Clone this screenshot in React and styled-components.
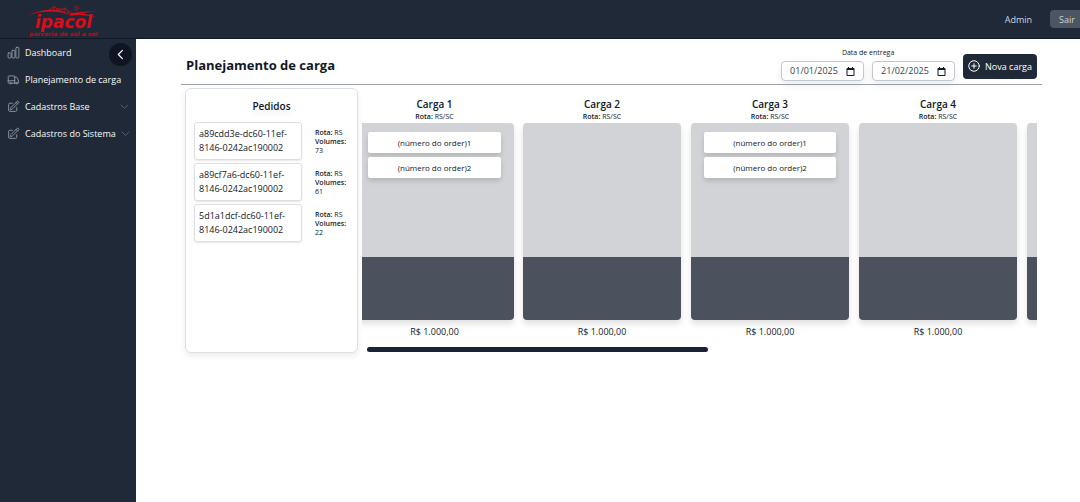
import React, { useState } from "react";
import styled, { createGlobalStyle } from "styled-components";

const GlobalStyle = createGlobalStyle`
  *, *::before, *::after {
    box-sizing: border-box;
  }

  body {
    margin: 0;
    background-color: #ffffff;
    color: #111827;
    font-family: "Open Sans", "Noto Sans", sans-serif;
    font-size: 9px;
  }

  button, input {
    font: inherit;
    color: inherit;
  }

  b {
    font-weight: 600;
  }
`;

const Page = styled.div`
  display: flex;
  flex-direction: column;
  min-height: 100vh;
  overflow: hidden;
`;

const Header = styled.header`
  display: flex;
  align-items: center;
  justify-content: space-between;
  height: 39px;
  padding-left: 25px;
  background-color: #1f2937;
  border-bottom: 1px solid #111827;
`;

const Session = styled.div`
  display: flex;
  align-items: center;
  gap: 18px;
  margin-right: -4px;
  color: #d1d5db;
`;

const LogoutButton = styled.button`
  height: 18px;
  padding: 0 9px;
  border: 0;
  border-radius: 4px;
  background-color: #4b5563;
`;

const Layout = styled.div`
  display: flex;
  flex: 1;
`;

const Sidebar = styled.nav`
  position: relative;
  flex: none;
  width: 136px;
  background-color: #1f2937;
`;

const CollapseButton = styled.button`
  position: absolute;
  top: 4px;
  right: 4px;
  display: flex;
  align-items: center;
  justify-content: center;
  width: 23px;
  height: 23px;
  padding: 0;
  border: 0;
  border-radius: 50%;
  background-color: #0f1523;
  color: #ffffff;
`;

const Menu = styled.ul`
  margin: 0;
  padding: 0;
  list-style: none;
`;

const MenuLink = styled.a`
  display: flex;
  align-items: center;
  gap: 5px;
  height: 27px;
  padding: 0 7px;
  color: #f9fafb;
  text-decoration: none;
  white-space: nowrap;

  svg {
    flex: none;
    color: #8b929d;
  }

  svg:last-child {
    margin-left: auto;
    color: #6b7280;
  }
`;

const Main = styled.main`
  flex: 1;
  min-width: 0;
  padding: 9px 38px 40px 45px;
`;

const Toolbar = styled.div`
  display: flex;
  align-items: center;
  justify-content: space-between;
  height: 37px;
  padding: 0 5px;
  border-bottom: 1px solid #9ca3af;
`;

const Title = styled.h1`
  margin: 0;
  padding-bottom: 3px;
  font-size: 13px;
  font-weight: 700;
`;

const Actions = styled.div`
  display: flex;
  align-items: center;
  gap: 8px;
`;

const Period = styled.fieldset`
  min-width: 0;
  margin: 0;
  padding: 0 0 3px;
  border: 0;
  font-size: 7px;
  line-height: 10px;
`;

const PeriodTitle = styled.legend`
  margin: 0 auto;
  padding: 0 0 3px;
`;

const Dates = styled.div`
  display: flex;
  gap: 8px;
`;

const DateField = styled.label`
  display: flex;
  align-items: center;
  width: 83px;
  height: 20px;
  padding: 0 8px;
  border: 1px solid #c4c8ce;
  border-radius: 4px;
  background-color: #ffffff;
  box-shadow: 0 4px 8px rgba(0, 0, 0, 0.08);
  color: #374151;
  font-size: 9px;
`;

const DateInput = styled.input`
  flex: 1;
  width: 0;
  min-width: 0;
  padding: 0;
  border: 0;
  outline: 0;
  background: none;
`;

const NewButton = styled.button`
  display: flex;
  align-items: center;
  gap: 5px;
  height: 25px;
  padding: 0 5px;
  border: 0;
  border-radius: 4px;
  background-color: #1f2937;
  color: #ffffff;
  white-space: nowrap;
`;

const Content = styled.div`
  display: flex;
  gap: 4px;
  padding: 3px 5px 0 4px;
`;

const Orders = styled.section`
  flex: none;
  width: 173px;
  min-height: 265px;
  padding: 10px 8px;
  border: 1px solid #dcdee2;
  border-radius: 6px;
  box-shadow: 0 3px 6px rgba(0, 0, 0, 0.08);
`;

const SectionTitle = styled.h2`
  margin: 0;
  font-size: 10px;
  font-weight: 600;
  line-height: 15px;
  text-align: center;
  text-shadow: 0 4px 6px rgba(0, 0, 0, 0.1);
`;

const OrderList = styled.ul`
  display: flex;
  flex-direction: column;
  gap: 3px;
  margin: 0;
  padding: 8px 0 0;
  list-style: none;
`;

const OrderRow = styled.li`
  display: flex;
  align-items: center;
  gap: 13px;
`;

const OrderCode = styled.div`
  flex: none;
  width: 108px;
  height: 38px;
  padding: 4px;
  border: 1px solid #dcdee2;
  border-radius: 3px;
  box-shadow: 0 1px 2px rgba(0, 0, 0, 0.1);
  line-height: 14px;
`;

const Details = styled.p`
  margin: 0;
  font-size: 7px;
  line-height: 9px;
`;

const Board = styled.section`
  flex: 1;
  min-width: 0;
  overflow: hidden;
`;

const Loads = styled.div`
  display: flex;
  gap: 9px;
  margin-left: -7px;
  padding-top: 9px;
`;

const Load = styled.article`
  flex: none;
  width: 159px;
  text-align: center;

  & + & {
    width: 158px;
    margin-right: 1px;
  }
`;

const LoadBody = styled.div`
  display: flex;
  flex-direction: column;
  gap: 4px;
  height: 197px;
  margin-top: 2px;
  padding: 9px 13px;
  border-radius: 4px;
  background: linear-gradient(#d1d3d7 134px, #4b515d 134px);
  box-shadow: 0 4px 6px rgba(0, 0, 0, 0.12);
`;

const LoadOrder = styled.div`
  height: 21px;
  border-radius: 2px;
  background-color: #ffffff;
  box-shadow: 0 3px 5px rgba(0, 0, 0, 0.14);
  font-size: 8px;
  line-height: 21px;
`;

const Price = styled.p`
  margin: 0;
  padding-top: 5px;
  line-height: 14px;
`;

const ScrollThumb = styled.div`
  width: 50.5%;
  height: 5px;
  margin: 8px 0 0 5px;
  border-radius: 3px;
  background-color: #1a2336;
`;

const Icon = ({ size, width = 1.5, children }) => (
  <svg
    width={size}
    height={size}
    viewBox="0 0 24 24"
    fill="none"
    stroke="currentColor"
    strokeWidth={width}
    strokeLinecap="round"
    strokeLinejoin="round"
    aria-hidden="true"
  >
    {children}
  </svg>
);

const ChartIcon = () => (
  <Icon size={13} width={1.8}>
    <rect x="2" y="13" width="5.5" height="9" rx="1.2" />
    <rect x="9.2" y="8" width="5.5" height="14" rx="1.2" />
    <rect x="16.4" y="2.5" width="5.5" height="19.5" rx="1.2" />
  </Icon>
);

const TruckIcon = () => (
  <Icon size={13} width={1.8}>
    <path d="M8.25 18.75a1.5 1.5 0 0 1-3 0m3 0a1.5 1.5 0 0 0-3 0m3 0h6m-9 0H3.375a1.125 1.125 0 0 1-1.125-1.125V14.25m17.25 4.5a1.5 1.5 0 0 1-3 0m3 0a1.5 1.5 0 0 0-3 0m3 0h1.125c.621 0 1.129-.504 1.09-1.124a17.902 17.902 0 0 0-3.213-9.193 2.056 2.056 0 0 0-1.58-.86H14.25M16.5 18.75h-2.25m0-11.177v-.958c0-.568-.422-1.048-.987-1.106a48.554 48.554 0 0 0-10.026 0 1.106 1.106 0 0 0-.987 1.106v7.635m12-6.677v6.677m0 4.5v-4.5m0 0h-12" />
  </Icon>
);

const EditIcon = () => (
  <Icon size={13} width={1.8}>
    <path d="m16.862 4.487 1.687-1.688a1.875 1.875 0 1 1 2.652 2.652L10.582 16.07a4.5 4.5 0 0 1-1.897 1.13L6 18l.8-2.685a4.5 4.5 0 0 1 1.13-1.897l8.932-8.931Zm0 0L19.5 7.125M18 14v4.75A2.25 2.25 0 0 1 15.75 21H5.25A2.25 2.25 0 0 1 3 18.75V8.25A2.25 2.25 0 0 1 5.25 6H10" />
  </Icon>
);

const CalendarIcon = () => (
  <svg width="9" height="9" viewBox="0 0 18 18" fill="#111827" aria-hidden="true">
    <path d="M4 0h2v2h6V0h2v2h1a2 2 0 0 1 2 2v12a2 2 0 0 1-2 2H3a2 2 0 0 1-2-2V4a2 2 0 0 1 2-2h1zM3 6v10h12V6z" />
  </svg>
);

const Logo = () => (
  <svg width="78" height="36" viewBox="0 0 78 36" fill="#d90d1b" role="img" aria-label="ipacol">
    <path d="M2 14.400 Q16 8.400 29 8.800 Q38 9.400 47 14.800 Q36 10.600 26 10.600 Q13 10.600 2 14.400Z" />
    <path d="M43 13.800 Q55 9.200 73 10.800 Q57 10.800 47 14.800Z" />
    <path d="M45 11.800 Q60 12 71 16 Q58 13.600 47 13.400Z" />
    <path
      d="M22 10 Q27 8 29 5.500 Q32 8.500 35 8.200 Q38 8.600 40 7 Q42 10 46 12M29 5v5M31.500 7.500v2M34 7.500v3M37 8v3M40 6.500v5M43 9.500v2.500"
      fill="none"
      stroke="#d90d1b"
      strokeWidth="0.8"
    />
    <circle cx="51.500" cy="7" r="1.500" fill="none" stroke="#a91325" strokeWidth="0.8" />
    <circle cx="51.500" cy="7" r="2.600" fill="none" stroke="#a91325" strokeWidth="0.8" strokeDasharray="0.8 1.200" />
    <text x="38.500" y="27" textAnchor="middle" fontFamily="DejaVu Sans" fontSize="17" fontWeight="700" fontStyle="italic">
      ipacol
    </text>
    <text x="38.500" y="35" textAnchor="middle" fontFamily="DejaVu Sans" fontSize="6" fontWeight="700" fontStyle="italic" fillOpacity="0.75">
      parceria de sol a sol
    </text>
  </svg>
);

const menuItems = [
  { label: "Dashboard", icon: ChartIcon },
  { label: "Planejamento de carga", icon: TruckIcon },
  { label: "Cadastros Base", icon: EditIcon, hasChildren: true },
  { label: "Cadastros do Sistema", icon: EditIcon, hasChildren: true },
];

const orders = [
  { id: "a89cdd3e-dc60-11ef-8146-0242ac190002", volumes: 73 },
  { id: "a89cf7a6-dc60-11ef-8146-0242ac190002", volumes: 61 },
  { id: "5d1a1dcf-dc60-11ef-8146-0242ac190002", volumes: 22 },
];

const loads = [
  { id: 1, orders: [1, 2] },
  { id: 2, orders: [] },
  { id: 3, orders: [1, 2] },
  { id: 4, orders: [] },
  { id: 5, orders: [] },
];

const App = () => {
  const [start, setStart] = useState("01/01/2025");
  const [end, setEnd] = useState("21/02/2025");

  return (
    <Page>
      <GlobalStyle />
      <Header>
        <Logo />
        <Session>
          <span>Admin</span>
          <LogoutButton type="button">Sair</LogoutButton>
        </Session>
      </Header>
      <Layout>
        <Sidebar>
          <Menu>
            {menuItems.map(({ label, icon: ItemIcon, hasChildren }) => (
              <li key={label}>
                <MenuLink href="#">
                  <ItemIcon />
                  <span>{label}</span>
                  {hasChildren && (
                    <Icon size={9} width={2}>
                      <path d="m3 8 9 9 9-9" />
                    </Icon>
                  )}
                </MenuLink>
              </li>
            ))}
          </Menu>
          <CollapseButton type="button" aria-label="Recolher menu">
            <Icon size={13} width={2.2}>
              <path d="M15.500 4.500 8 12l7.500 7.500" />
            </Icon>
          </CollapseButton>
        </Sidebar>
        <Main>
          <Toolbar>
            <Title>Planejamento de carga</Title>
            <Actions>
              <Period>
                <PeriodTitle>Data de entrega</PeriodTitle>
                <Dates>
                  <DateField>
                    <DateInput
                      aria-label="Data inicial"
                      value={start}
                      onChange={(e) => setStart(e.target.value)}
                    />
                    <CalendarIcon />
                  </DateField>
                  <DateField>
                    <DateInput
                      aria-label="Data final"
                      value={end}
                      onChange={(e) => setEnd(e.target.value)}
                    />
                    <CalendarIcon />
                  </DateField>
                </Dates>
              </Period>
              <NewButton type="button">
                <Icon size={12} width={2}>
                  <circle cx="12" cy="12" r="10.5" />
                  <path d="M12 7.500v9M7.500 12h9" />
                </Icon>
                Nova carga
              </NewButton>
            </Actions>
          </Toolbar>
          <Content>
            <Orders>
              <SectionTitle>Pedidos</SectionTitle>
              <OrderList>
                {orders.map((order) => (
                  <OrderRow key={order.id}>
                    <OrderCode>{order.id}</OrderCode>
                    <Details>
                      <b>Rota:</b> RS
                      <br />
                      <b>Volumes:</b>
                      <br />
                      {order.volumes}
                    </Details>
                  </OrderRow>
                ))}
              </OrderList>
            </Orders>
            <Board>
              <Loads>
                {loads.map((load) => (
                  <Load key={load.id}>
                    <SectionTitle>Carga {load.id}</SectionTitle>
                    <Details>
                      <b>Rota:</b> RS/SC
                    </Details>
                    <LoadBody>
                      {load.orders.map((number) => (
                        <LoadOrder key={number}>(número do order){number}</LoadOrder>
                      ))}
                    </LoadBody>
                    <Price>R$ 1.000,00</Price>
                  </Load>
                ))}
              </Loads>
              <ScrollThumb />
            </Board>
          </Content>
        </Main>
      </Layout>
    </Page>
  );
};

export default App;
